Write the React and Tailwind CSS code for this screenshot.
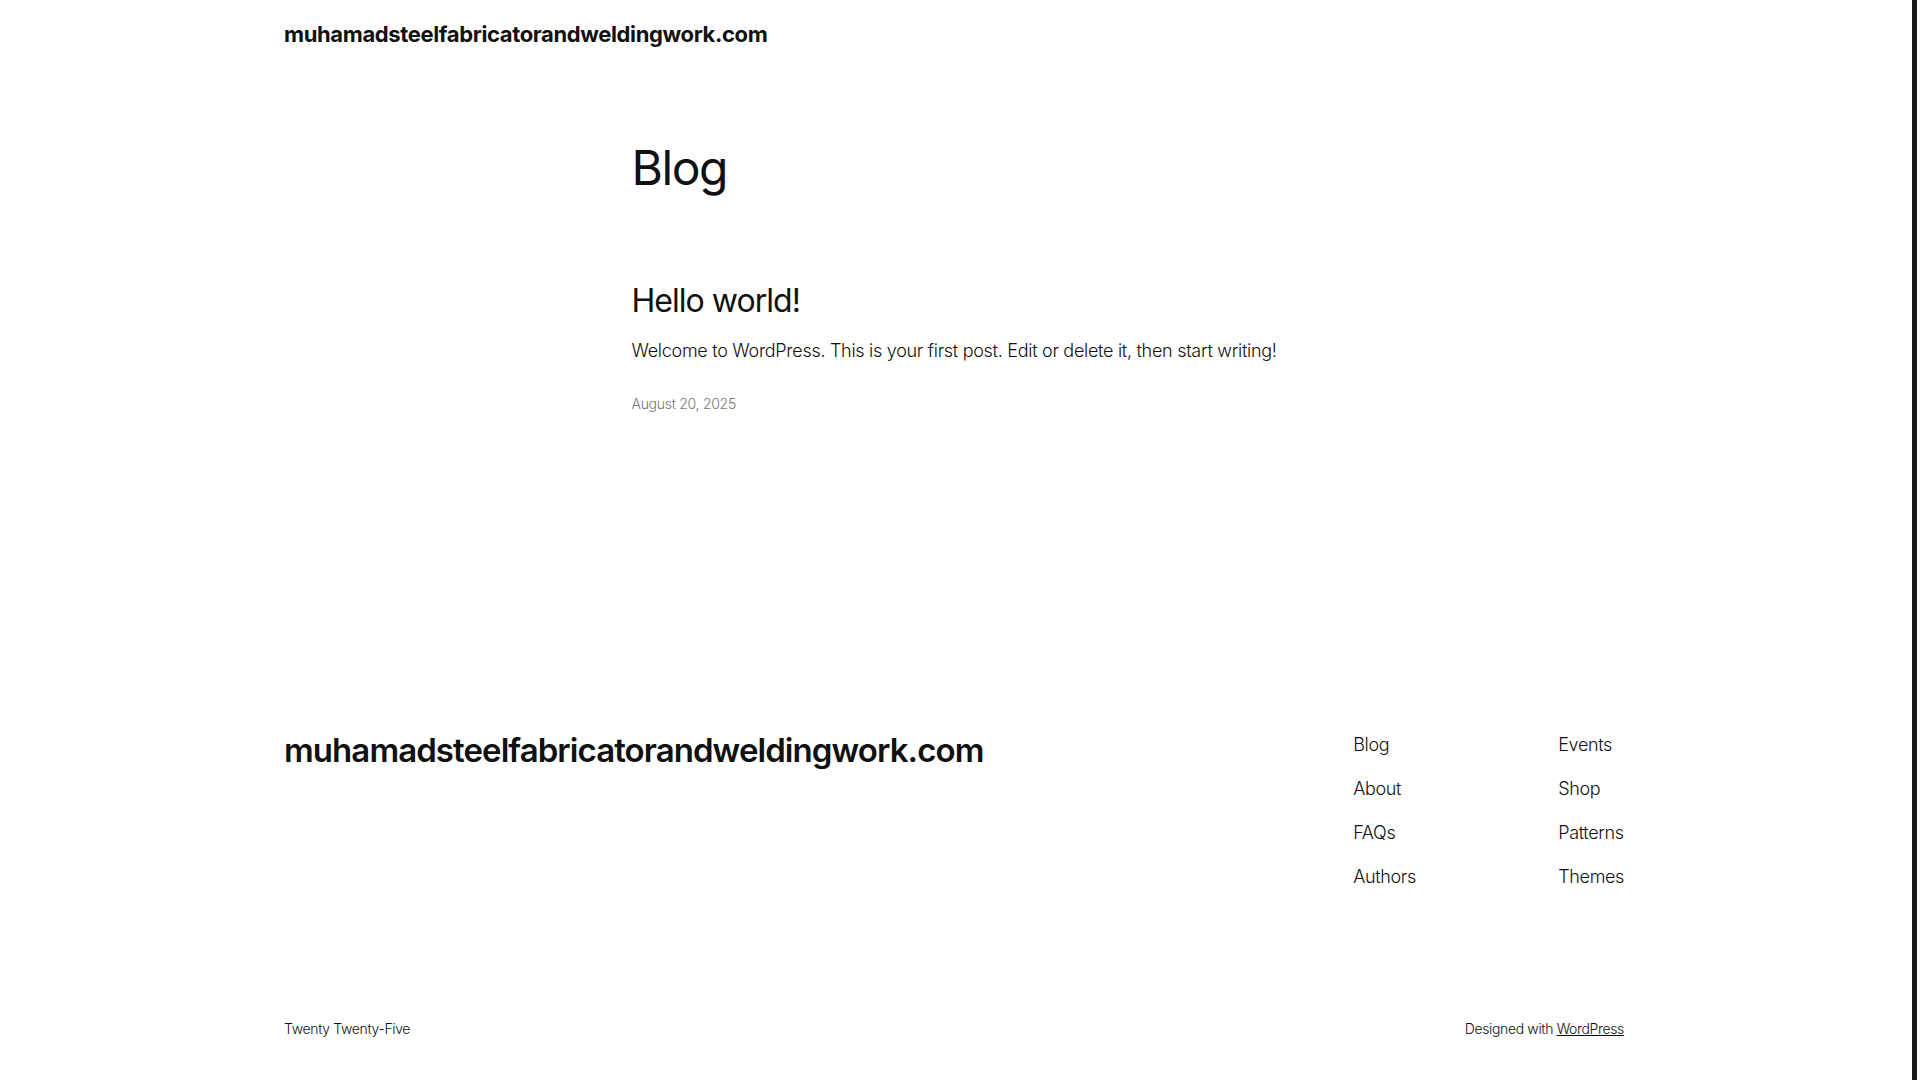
export default function App() {
  const navLeft = ["Blog", "About", "FAQs", "Authors"];
  const navRight = ["Events", "Shop", "Patterns", "Themes"];

  return (
    <div className="flex min-h-[1080px] bg-white text-[#111111] font-['Inter','Noto_Sans',sans-serif]">
      <div className="flex-1">
        {/* header */}
        <header className="mx-auto flex h-[68px] w-[1340px] items-center">
          <a href="#" className="text-[22px] font-bold tracking-[-0.017em]">
            muhamadsteelfabricatorandweldingwork.com
          </a>
        </header>

        {/* main */}
        <main className="mx-auto w-[645px] pt-[71px]">
          <h1 className="text-[48px] font-normal leading-[1.2] tracking-[-0.03em]">Blog</h1>
          <article className="mt-[85px]">
            <h2 className="text-[32px] font-normal leading-[1.2] tracking-[-0.03em]">
              <a href="#">Hello world!</a>
            </h2>
            <p className="mt-[16px] whitespace-nowrap text-[18px] font-light leading-[29px] tracking-[-0.016em]">
              Welcome to WordPress. This is your first post. Edit or delete it, then start writing!
            </p>
            <div className="mt-[29px] text-[14px] font-light leading-[20px] tracking-[-0.02em] text-[#777777]">
              August 20, 2025
            </div>
          </article>
        </main>

        {/* footer */}
        <footer className="mx-auto mt-[317px] w-[1340px] pb-[40px]">
          <div className="flex justify-between">
            <a href="#" className="text-[33px] font-semibold leading-[1.2] tracking-[-0.028em]">
              muhamadsteelfabricatorandweldingwork.com
            </a>
            <nav className="flex">
              <ul className="flex w-[205px] flex-col gap-[16px]">
                {navLeft.map((item) => (
                  <li key={item} className="text-[18px] font-light leading-[28px] tracking-[-0.02em]">
                    <a href="#">{item}</a>
                  </li>
                ))}
              </ul>
              <ul className="flex flex-col gap-[16px]">
                {navRight.map((item) => (
                  <li key={item} className="text-[18px] font-light leading-[28px] tracking-[-0.02em]">
                    <a href="#">{item}</a>
                  </li>
                ))}
              </ul>
            </nav>
          </div>
          <div className="mt-[128px] flex justify-between text-[14px] font-light leading-[20px] tracking-[-0.025em]">
            <span>Twenty Twenty-Five</span>
            <span>
              Designed with{" "}
              <a href="#" className="underline">
                WordPress
              </a>
            </span>
          </div>
        </footer>
      </div>

      {/* scrollbar strip */}
      <div className="flex w-[12px] justify-center bg-white">
        <div className="w-[5px] bg-[#1a1a1a]" />
      </div>
    </div>
  );
}
